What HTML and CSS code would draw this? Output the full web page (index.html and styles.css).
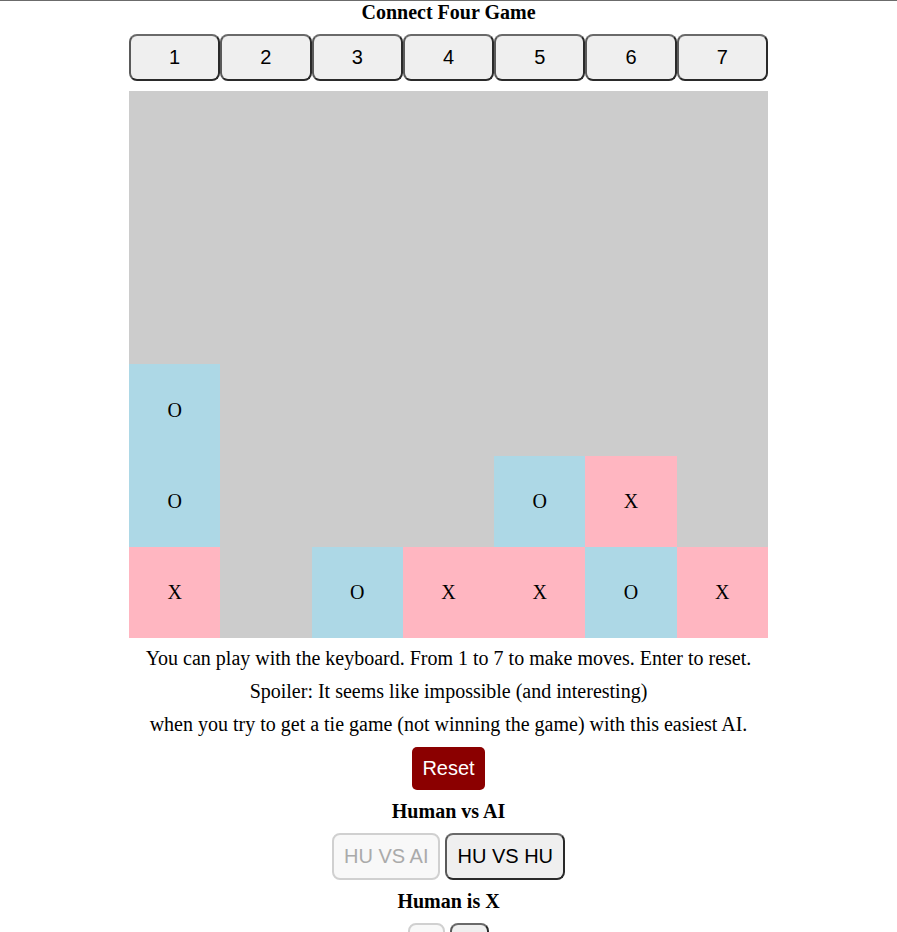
FILE: index.html
```html
<!DOCTYPE html>
<html>
<head>
<meta charset="utf-8">
<title>Connect Four Game</title>
<link rel="stylesheet" href="styles.css">
</head>
<body>
<div class="page">
  <h1 class="title">Connect Four Game</h1>
  <div class="cols">
    <button class="col-btn">1</button>
    <button class="col-btn">2</button>
    <button class="col-btn">3</button>
    <button class="col-btn">4</button>
    <button class="col-btn">5</button>
    <button class="col-btn">6</button>
    <button class="col-btn">7</button>
  </div>
  <div class="board">
    <div class="cell"></div><div class="cell"></div><div class="cell"></div><div class="cell"></div><div class="cell"></div><div class="cell"></div><div class="cell"></div>
    <div class="cell"></div><div class="cell"></div><div class="cell"></div><div class="cell"></div><div class="cell"></div><div class="cell"></div><div class="cell"></div>
    <div class="cell"></div><div class="cell"></div><div class="cell"></div><div class="cell"></div><div class="cell"></div><div class="cell"></div><div class="cell"></div>
    <div class="cell o">O</div><div class="cell"></div><div class="cell"></div><div class="cell"></div><div class="cell"></div><div class="cell"></div><div class="cell"></div>
    <div class="cell o">O</div><div class="cell"></div><div class="cell"></div><div class="cell"></div><div class="cell o">O</div><div class="cell x">X</div><div class="cell"></div>
    <div class="cell x">X</div><div class="cell"></div><div class="cell o">O</div><div class="cell x">X</div><div class="cell x">X</div><div class="cell o">O</div><div class="cell x">X</div>
  </div>
  <div class="info">
    <div class="line">You can play with the keyboard. From 1 to 7 to make moves. Enter to reset.</div>
    <div class="line">Spoiler: It seems like impossible (and interesting)</div>
    <div class="line">when you try to get a tie game (not winning the game) with this easiest AI.</div>
  </div>
  <button class="reset">Reset</button>
  <h2 class="label">Human vs AI</h2>
  <div class="choice">
    <button class="opt" disabled>HU VS AI</button>
    <button class="opt">HU VS HU</button>
  </div>
  <h2 class="label">Human is X</h2>
  <div class="choice">
    <button class="opt" disabled>X</button>
    <button class="opt">O</button>
  </div>
</div>
</body>
</html>
```
FILE: styles.css
```css
html, body {
  margin: 0;
  padding: 0;
  background: #fff;
}
body {
  font-family: "Liberation Serif", "Times New Roman", serif;
  color: #000;
}
.page {
  border-top: 1px solid #6b6b6b;
  display: flex;
  flex-direction: column;
  align-items: center;
}
.title {
  margin: 0;
  font-size: 20px;
  line-height: 23px;
  font-weight: bold;
}
.cols {
  margin-top: 10px;
  width: 639px;
  display: grid;
  grid-template-columns: repeat(7, 1fr);
}
.col-btn {
  font-family: "Liberation Sans", Arial, sans-serif;
  font-size: 20px;
  line-height: 23px;
  padding: 10px 0;
  background: #efefef;
  border: 2px solid #2a2a2a;
  border-top-color: #6a6a6a;
  border-left-color: #5a5a5a;
  border-radius: 8px;
  color: #000;
}
.board {
  margin-top: 10px;
  width: 639px;
  height: 547px;
  display: grid;
  grid-template-columns: repeat(7, 1fr);
  grid-template-rows: repeat(6, 1fr);
  background: #cccccc;
}
.cell {
  display: flex;
  align-items: center;
  justify-content: center;
  font-size: 20px;
}
.cell.o { background: #add8e6; }
.cell.x { background: #ffb6c1; }
.info {
  margin-top: 4px;
  text-align: center;
  font-size: 20px;
}
.line {
  line-height: 33px;
}
.reset {
  margin-top: 6px;
  font-family: "Liberation Sans", Arial, sans-serif;
  font-size: 20px;
  line-height: 23px;
  padding: 10px 10px;
  background: #8b0000;
  color: #fff;
  border: none;
  border-radius: 5px;
}
.label {
  margin: 10px 0 0;
  font-size: 20px;
  line-height: 23px;
  font-weight: bold;
}
.choice {
  margin-top: 10px;
  display: flex;
  gap: 5px;
}
.opt {
  font-family: "Liberation Sans", Arial, sans-serif;
  font-size: 20px;
  line-height: 23px;
  padding: 10px;
  background: #efefef;
  color: #000;
  border: 2px solid #2a2a2a;
  border-top-color: #6a6a6a;
  border-left-color: #5a5a5a;
  border-radius: 8px;
}
.opt:disabled {
  background: #f8f8f8;
  color: #aaaaaa;
  border-color: #d0d0d0;
}
```
